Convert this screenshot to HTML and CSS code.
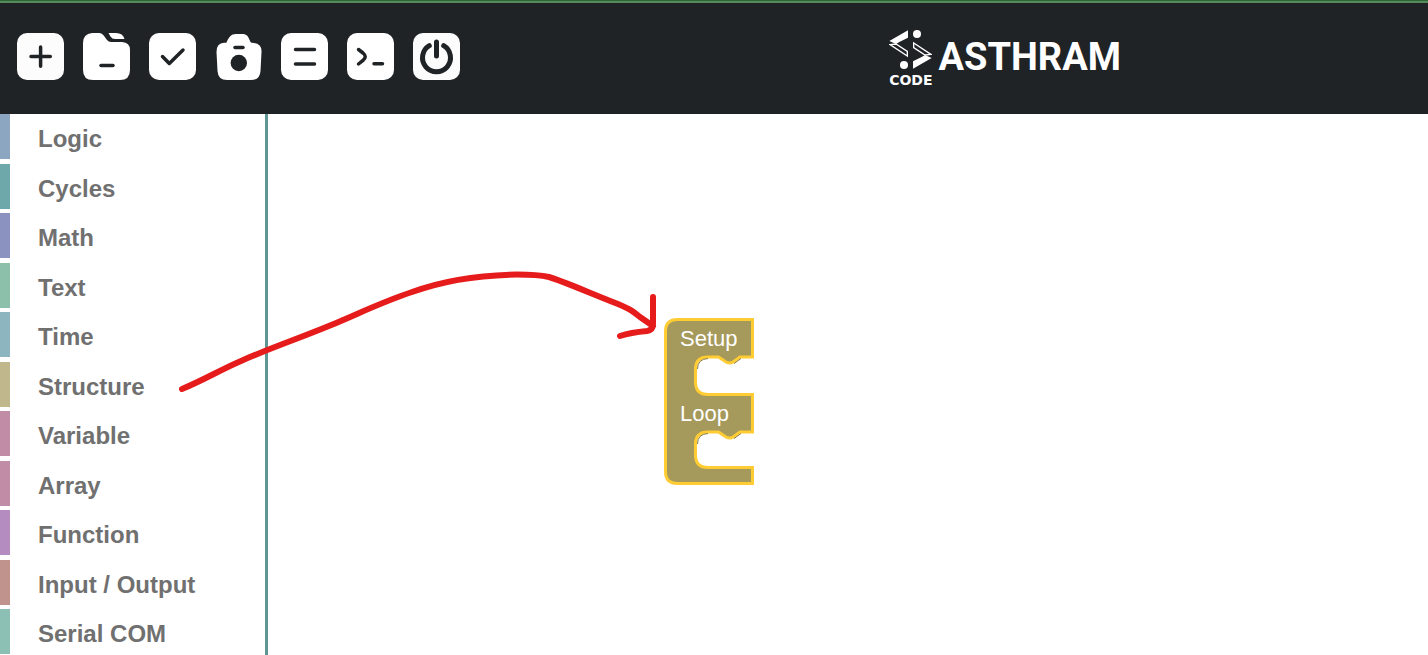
FILE: index.html
```html
<!DOCTYPE html>
<html lang="en">
<head>
<meta charset="utf-8">
<title>Asthram Code</title>
<link rel="stylesheet" href="styles.css">
</head>
<body>
<header class="topbar">
  <div class="toolbar" role="toolbar" aria-label="Project">
    <button class="tool" type="button" aria-label="New">
      <svg viewBox="0 0 47 47"><rect class="face-soft" width="47" height="47" rx="10"/><path class="ink" d="M23.600 14V33.300M14 23.600H33.300"/></svg>
    </button>
    <button class="tool" type="button" aria-label="Open">
      <svg viewBox="0 0 47 47"><path class="face" d="M9 0H16.500Q19 0 20.700 2.500L24 7Q25.500 9 28 9H39Q47 9.500 47 17V37Q47 47 37 47H10Q0 47 0 37V10Q0 1 9 0ZM25.500 0H33Q40 0 41.500 6H32Q29 6 27.500 3.500Z"/><path class="ink" d="M18 32.500H30"/></svg>
    </button>
    <button class="tool" type="button" aria-label="Verify">
      <svg viewBox="0 0 47 47"><rect class="face" width="47" height="47" rx="10"/><path class="ink" d="M13.500 23.500L20.300 30.500L34 17"/></svg>
    </button>
    <button class="tool" type="button" aria-label="Capture">
      <svg viewBox="0 0 47 47"><path class="face" d="M11.500 9.500C14 4 16 1 21 1H27C32 1 33 3 35.500 9Q36 10 39 10Q47 11 46.500 19L45.500 38Q45 47 36 47H12Q3 47 2.500 38L1.500 19Q1.500 10 9 9.800Q11 10 11.500 9.500Z"/><path class="ink" d="M20 14.500H28"/><circle class="lens" cx="23.800" cy="30" r="8.200"/></svg>
    </button>
    <button class="tool" type="button" aria-label="Serial monitor">
      <svg viewBox="0 0 47 47"><rect class="face" width="47" height="47" rx="10"/><path class="ink" d="M14.500 16.500H33.500M14.500 31H33.500"/></svg>
    </button>
    <button class="tool" type="button" aria-label="Terminal">
      <svg viewBox="0 0 47 47"><rect class="face" width="47" height="47" rx="10"/><path class="ink" d="M11.500 16.500L16 20Q20.500 23.700 16 27.400L11.500 31M27 30.800H35.500"/></svg>
    </button>
    <button class="tool" type="button" aria-label="Exit">
      <svg viewBox="0 0 47 47"><rect class="face-soft" width="47" height="47" rx="10"/><path class="ink ink-heavy" d="M23.500 9V23M16.300 12.700A14 14 0 1 0 30.700 12.700"/></svg>
    </button>
  </div>
  <div class="brand">
    <div class="brand-mark">
      <svg class="brand-sign" viewBox="27 33 129 117" aria-hidden="true">
        <g id="half">
          <path d="M84 34V56L58 69L48 75L28 66Z"/>
          <path class="brand-line" d="M30 77L48 75L82 97V111Z"/>
          <circle cx="111" cy="45" r="12"/>
        </g>
        <use href="#half" transform="rotate(180 91.500 91.500)"/>
      </svg>
      <span class="brand-sub">CODE</span>
    </div>
    <span class="brand-name">ASTHRAM</span>
  </div>
</header>
<main class="editor">
  <nav class="toolbox" aria-label="Blocks">
    <a class="category logic" href="#logic">Logic</a>
    <a class="category cycles" href="#cycles">Cycles</a>
    <a class="category math" href="#math">Math</a>
    <a class="category text" href="#text">Text</a>
    <a class="category time" href="#time">Time</a>
    <a class="category structure" href="#structure">Structure</a>
    <a class="category variable" href="#variable">Variable</a>
    <a class="category array" href="#array">Array</a>
    <a class="category function" href="#function">Function</a>
    <a class="category io" href="#io">Input / Output</a>
    <a class="category serial" href="#serial">Serial COM</a>
  </nav>
  <section class="workspace" aria-label="Workspace">
    <svg class="block" viewBox="0 0 90 167">
      <path class="block-body" d="M13.500 1.500H88.500V39H76L69 44Q66 46 62 44L54.500 39H44Q31.500 39 31.500 51V64Q31.500 76.500 44 76.500H88.500V114H76L69 119Q66 121 62 119L54.500 114H44Q31.500 114 31.500 126V137Q31.500 149.500 44 149.500H88.500V165.500H13.500Q1.500 165.500 1.500 153.500V13.500Q1.500 1.500 13.500 1.500Z"/>
      <path class="block-shade" d="M70 45.500L77 40.500M33.500 51Q33.500 41 44 40.500M70 120.500L77 115.500M33.500 126Q33.500 116 44 115.500"/>
      <text class="block-label" x="16" y="28">Setup</text>
      <text class="block-label" x="16" y="103">Loop</text>
    </svg>
  </section>
  <svg class="pen" viewBox="0 114 760 400" aria-hidden="true">
    <path d="M182 389C204 380 220 370 241 361C270 348 300 338 330 325.500C360 313 382 302 412 292C445 280 480 275 517 274.500C530 274.500 540 275 549 277C560 280 590 293 618 304C632 310 634 312 640 317L653 326M653 297V324Q653 330 647 331C636 332 629 333 620 336"/>
  </svg>
</main>
</body>
</html>
```

FILE: styles.css
```css
* {
  box-sizing: border-box;
}

body {
  margin: 0;
  min-height: 100vh;
  display: flex;
  flex-direction: column;
  background: #fff;
  font-family: "Liberation Sans", Arial, sans-serif;
}

.topbar {
  display: flex;
  align-items: center;
  justify-content: space-between;
  height: 114px;
  padding: 0 307px 1px 17px;
  background: linear-gradient(#2e6534 1px, #588b5c 1px, #588b5c 3px, #1f2326 3px);
}

.toolbar {
  display: flex;
  gap: 19px;
}

.tool {
  width: 47px;
  height: 47px;
  padding: 0;
  border: 0;
  background: none;
  cursor: pointer;
}

.tool svg,
.brand-sign,
.block {
  display: block;
}

.face {
  fill: #fff;
}

.face-soft {
  fill: #fcfcfc;
}

.lens {
  fill: #1f2326;
}

.ink {
  fill: none;
  stroke: #1f2326;
  stroke-width: 3.5;
  stroke-linecap: round;
  stroke-linejoin: round;
}

.ink-heavy {
  stroke-width: 5;
}

.brand {
  display: flex;
  align-items: center;
  gap: 6px;
  color: #fff;
}

.brand-mark {
  display: flex;
  flex-direction: column;
  gap: 4px;
  padding-top: 4px;
}

.brand-sign {
  width: 43px;
  height: 39px;
  fill: #fff;
}

.brand-line {
  fill: none;
  stroke: #fff;
  stroke-width: 4;
}

.brand-sub {
  font: bold 14px/14px "DejaVu Sans", sans-serif;
}

.brand-name {
  font: bold 38px/40px Roboto, sans-serif;
}

.editor {
  position: relative;
  flex: 1;
  display: flex;
}

.toolbox {
  width: 268px;
  border-right: 3px solid #5f9595;
}

.category {
  display: block;
  margin-bottom: 4px;
  padding: 4px 0 0 28px;
  border-left: 10px solid;
  font-size: 24px;
  font-weight: bold;
  line-height: 41px;
  text-decoration: none;
  color: #707070;
}

.category:nth-child(odd) {
  margin-bottom: 5px;
}

.category:last-child {
  margin-bottom: 0;
}

.logic { border-left-color: #8ca5c0; }
.cycles { border-left-color: #6fa8ab; }
.math { border-left-color: #8c92c0; }
.text { border-left-color: #8cc0ab; }
.time { border-left-color: #8cb5c0; }
.structure { border-left-color: #c0b78c; }
.variable,
.array { border-left-color: #c08ca6; }
.function { border-left-color: #b58cc0; }
.io { border-left-color: #c0938c; }
.serial { border-left-color: #8cc0b5; }

.workspace {
  position: relative;
  flex: 1;
}

.block {
  position: absolute;
  left: 396px;
  top: 204px;
  width: 90px;
  height: 167px;
}

.block-body {
  fill: #a5995b;
  stroke: #fc3;
  stroke-width: 3;
}

.block-shade {
  fill: none;
  stroke: #847a49;
  stroke-width: 1;
}

.block-label {
  font-size: 22px;
  fill: #fff;
}

.pen {
  position: absolute;
  left: 0;
  top: 0;
  width: 760px;
  height: 400px;
  pointer-events: none;
  fill: none;
  stroke: #e61c1c;
  stroke-width: 6;
  stroke-linecap: round;
  stroke-linejoin: round;
}
```
